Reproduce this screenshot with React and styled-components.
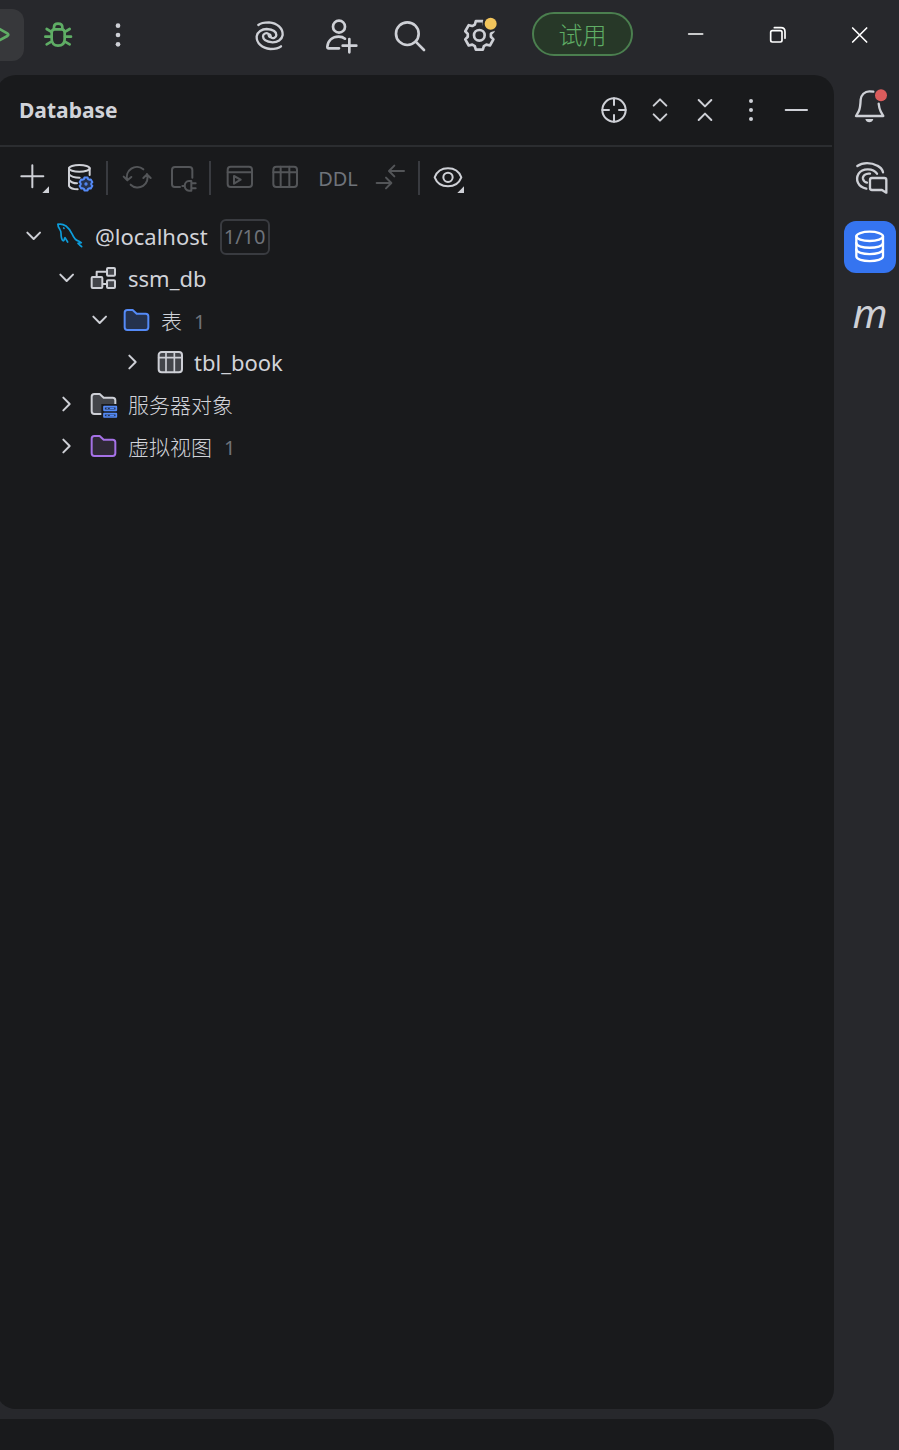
import React from "react";
import styled, { createGlobalStyle, css } from "styled-components";

const color = {
    frame : "#27282c",
    panel : "#191a1c",
    line : "#2b2d30",
    separator : "#393b40",
    text : "#d1d3d9",
    muted : "#6f737a",
    icon : "#ced0d6",
    disabled : "#535558",
    blue : "#548af7",
    green : "#5fad65"
};

const GlobalStyle = createGlobalStyle`
    * { box-sizing : border-box; }
    html, body, #root { height : 100%; }
    body {
        margin : 0;
        background : ${color.frame};
        color : ${color.text};
        font-family : "Noto Sans", "Noto Sans CJK SC", sans-serif;
        font-size : 22px;
        overflow : hidden;
    }
    button {
        padding : 0;
        border : 0;
        background : none;
        color : inherit;
        font : inherit;
        cursor : pointer;
    }
`;

const Window = styled.div`
    display : flex;
    flex-direction : column;
    height : 100vh;
`;

const TitleBar = styled.header`
    display : flex;
    align-items : center;
    justify-content : space-between;
    height : 75px;
    padding : 0 14px 5px 0;
`;

const Group = styled.div`
    display : flex;
    align-items : center;
    gap : ${props => props.$gap || 0}px;
`;

const RunButton = styled.button`
    display : flex;
    width : 24px;
    height : 52px;
    border-radius : 0 12px 12px 0;
    background : #37383b;
    overflow : hidden;
`;

const BarButton = styled.button`
    display : flex;
    align-items : center;
    justify-content : center;
    width : 52px;
    height : 52px;
    border-radius : 12px;
    ${props => props.$active && css`
        background : #3574f0;
    `}
`;

const TrialButton = styled.button`
    width : 101px;
    height : 44px;
    margin : 0 18px 2px 8px;
    padding-top : 2px;
    border : 2px solid #4b7f4f;
    border-radius : 22px;
    background : #273828;
    color : ${color.green};
    font-size : 24px;
    font-weight : 300;
    line-height : 36px;
`;

const Workspace = styled.div`
    display : flex;
    flex : 1;
    min-height : 0;
`;

const Column = styled.main`
    display : flex;
    flex : 1;
    flex-direction : column;
    gap : 10px;
    min-width : 0;
`;

const Panel = styled.section`
    flex : 1;
    margin-left : -4px;
    padding-left : 4px;
    border-radius : 20px;
    background : ${color.panel};
`;

const BottomPanel = styled.section`
    height : 31px;
    border-radius : 0 20px 0 0;
    background : ${color.panel};
`;

const PanelHeader = styled.div`
    display : flex;
    align-items : center;
    justify-content : space-between;
    height : 72px;
    margin-right : 2px;
    padding : 0 19px;
    border-bottom : 2px solid ${color.line};
`;

const Title = styled.h1`
    margin : 0;
    font-size : 21px;
    font-weight : 700;
`;

const SmallButton = styled.button`
    display : flex;
    width : 32px;
    height : 32px;
`;

const Toolbar = styled.div`
    display : flex;
    align-items : center;
    height : 62px;
    padding-left : 10px;
`;

const ToolButton = styled.button`
    display : flex;
    align-items : center;
    justify-content : center;
    width : ${props => props.$wide ? 60 : 46}px;
    height : 40px;
    color : ${props => props.disabled ? color.disabled : color.icon};
    font-size : 20px;
`;

const DdlLabel = styled.span`
    color : ${color.muted};
`;

const Separator = styled.span`
    width : 2px;
    height : 34px;
    margin : 0 5px 0 4px;
    background : ${color.separator};
`;

const Tree = styled.ul`
    margin : 0;
    padding : 7px 0 0;
    list-style : none;
`;

const Row = styled.li`
    display : flex;
    align-items : center;
    gap : 10px;
    height : 42px;
    padding-left : ${props => 22 + props.$level * 33}px;
`;

const Toggle = styled.button`
    display : flex;
    width : 24px;
    height : 24px;
`;

const Label = styled.span`
    padding : 0 2px 2px 1px;
    font-size : 22px;
    line-height : 30px;
    ${props => props.$cjk && css`
        padding-bottom : 0;
        font-size : 21px;
        font-weight : 300;
    `}
`;

const Count = styled.span`
    color : ${color.muted};
    font-size : 20px;
`;

const Badge = styled.span`
    padding : 0 2px;
    border : 2px solid ${color.separator};
    border-radius : 6px;
    color : ${color.muted};
    font-size : 20px;
    line-height : 32px;
`;

const Stripe = styled.nav`
    display : flex;
    flex-direction : column;
    align-items : center;
    gap : 18px;
    width : 65px;
    padding : 6px 0 0 7px;
`;

const Maven = styled.span`
    padding-bottom : 8px;
    color : ${color.icon};
    font-size : 40px;
    font-style : italic;
    line-height : 40px;
`;

const Svg = styled.svg`
    display : block;
    flex : none;
    overflow : visible;
    fill : none;
    stroke : currentColor;
    stroke-linecap : round;
    stroke-linejoin : round;
`;

// Icons are drawn on a grid three times finer than their size
const Icon = ({ size = 40, stroke = 8, tint = color.icon, children }) => (
    <Svg width={size} height={size} viewBox={`0 0 ${size * 3} ${size * 3}`} strokeWidth={stroke} color={tint} aria-hidden="true">
        {children}
    </Svg>
);

const gear = (cx, cy, outer, inner) => {
    const points = [];
    for (let i = 0; i < 6; i++) {
        const a = -Math.PI / 2 + i * Math.PI / 3;
        [[-0.4, inner], [-0.24, outer], [0.24, outer], [0.4, inner]].forEach(([d, r]) => {
            points.push(`${(cx + r * Math.cos(a + d)).toFixed(1)},${(cy + r * Math.sin(a + d)).toFixed(1)}`);
        });
    }
    return `M${points.join("L")}Z`;
};

const Corner = () => <path d="M96 73V93H76Z" fill="currentColor" stroke="none" />;

const Dots = ({ c, gap, r }) => (
    <g fill="currentColor" stroke="none">
        <circle cx={c} cy={c - gap} r={r} />
        <circle cx={c} cy={c} r={r} />
        <circle cx={c} cy={c + gap} r={r} />
    </g>
);

const swirl = "M25 30C33 23 45 22 57 22C82 24 99 40 98 60C96 74 82 82 68 82C52 81 39 75 39 64C39 55 50 53 54 56C58 59 54 65 60 66";
const folder = "M8 17Q8 9 16 9H32L44 20H71Q79 20 79 28V61Q79 69 71 69H16Q8 69 8 61Z";

const nodeIcons = {
    mysql : (
        <Icon size={28} stroke={5} tint="#0d9ddb">
            <path d="M6 4C14 2 24 5 30 9C38 15 44 24 49 34C53 44 60 52 69 55L76 59L66 61L71 66L77 71" />
            <path d="M6 4C5 10 8 14 12 20C17 26 14 33 16 42C17 48 20 55 23 53C26 50 24 46 27 44L35 57" />
            <path d="M23 15L24 16" />
        </Icon>
    ),
    schema : (
        <Icon size={28} stroke={6}>
            <path d="M23 34V20H53M40 57H53" />
            <g fill="#43454a">
                <rect x="8" y="36" width="32" height="33" rx="3" />
                <rect x="54" y="9" width="24" height="23" rx="3" />
                <rect x="54" y="46" width="24" height="23" rx="3" />
            </g>
        </Icon>
    ),
    tables : (
        <Icon size={28} stroke={6} tint={color.blue}>
            <path d={folder} fill="#25324d" />
        </Icon>
    ),
    table : (
        <Icon size={28} stroke={6}>
            <rect x="11" y="9" width="70" height="61" rx="9" fill="#43454a" />
            <path d="M11 26H81M33 9V70M58 9V70" strokeWidth="5" />
        </Icon>
    ),
    server : (
        <Icon size={28} stroke={6}>
            <path d={folder} fill="#43454a" />
            <path d="M37 39H86V84H37Z" fill={color.panel} stroke="none" />
            <g stroke={color.blue} fill="#25324d">
                <path d="M45 47H82V58H45ZM45 68H82V78H45Z" strokeWidth="5" />
                <path d="M54 52H55M64 52H74M54 73H55M64 73H74" strokeWidth="4" />
            </g>
        </Icon>
    ),
    views : (
        <Icon size={28} stroke={6} tint="#a571e6">
            <path d={folder} fill="#2f2936" />
        </Icon>
    )
};

const nodes = [
    { name : "@localhost", level : 0, icon : "mysql", open : true, badge : "1/10" },
    { name : "ssm_db", level : 1, icon : "schema", open : true },
    { name : "表", level : 2, icon : "tables", open : true, count : 1, cjk : true },
    { name : "tbl_book", level : 3, icon : "table" },
    { name : "服务器对象", level : 1, icon : "server", cjk : true },
    { name : "虚拟视图", level : 1, icon : "views", count : 1, cjk : true }
];

const TopBar = () => (
    <TitleBar>
        <Group $gap={8}>
            <RunButton aria-label="Run">
                <Svg width="24" height="52" viewBox="0 0 72 156" strokeWidth="8" color={color.green}>
                    <path d="M-20 50L22 73Q28 77 22 81L-20 104" />
                </Svg>
            </RunButton>
            <BarButton aria-label="Debug">
                <Icon tint={color.green}>
                    <path d="M50 43H71Q80 43 80 53V72C80 85 72 92 60 92C49 92 41 85 41 72V53Q41 43 50 43Z" />
                    <path d="M48 41V36C48 29 53 26 60 26S73 29 73 36V41" />
                    <path d="M26 42L39 50M22 65H40M26 88L40 80M95 42L82 50M99 65H81M95 88L81 80" />
                </Icon>
            </BarButton>
            <BarButton aria-label="More">
                <Icon><Dots c={60} gap={28} r={7} /></Icon>
            </BarButton>
        </Group>
        <Group $gap={18}>
            <BarButton aria-label="AI Assistant">
                <Icon stroke={7}>
                    <path d={swirl} />
                    <path d={swirl} transform="rotate(180 59 62)" />
                </Icon>
            </BarButton>
            <BarButton aria-label="Add user">
                <Icon>
                    <circle cx="57" cy="35" r="18" />
                    <path d="M57 100H26Q22 100 22 95C24 76 38 65 56 65C64 65 70 67 75 71" />
                    <path d="M68 92H109M88 72V112" />
                </Icon>
            </BarButton>
            <BarButton aria-label="Search">
                <Icon>
                    <circle cx="52" cy="56" r="34" />
                    <path d="M77 80L102 105" />
                </Icon>
            </BarButton>
            <BarButton aria-label="Settings">
                <Icon>
                    <path d={gear(58, 61, 44, 35)} />
                    <circle cx="58" cy="61" r="16" />
                    <circle cx="92" cy="26" r="25" fill={color.frame} stroke="none" />
                    <circle cx="92" cy="26" r="18" fill="#f2c55c" stroke="none" />
                </Icon>
            </BarButton>
            <TrialButton>试用</TrialButton>
            <Group $gap={30}>
                <BarButton aria-label="Minimize">
                    <Icon stroke={5} tint="#ffffff"><path d="M41 57H83" /></Icon>
                </BarButton>
                <BarButton aria-label="Restore">
                    <Icon stroke={5} tint="#ffffff">
                        <rect x="41" y="47" width="34" height="34" rx="5" />
                        <path d="M52 38H72Q84 38 84 50V70" />
                    </Icon>
                </BarButton>
                <BarButton aria-label="Close">
                    <Icon stroke={5} tint="#ffffff"><path d="M41 39L83 81M83 39L41 81" /></Icon>
                </BarButton>
            </Group>
        </Group>
    </TitleBar>
);

const DatabaseHeader = () => (
    <PanelHeader>
        <Title>Database</Title>
        <Group $gap={14}>
            <SmallButton aria-label="Locate">
                <Icon size={32} stroke={6}>
                    <circle cx="51" cy="48" r="35" />
                    <path d="M16 48H36M66 48H86M51 13V33M51 63V83" />
                </Icon>
            </SmallButton>
            <SmallButton aria-label="Expand all">
                <Icon size={32} stroke={6}><path d="M32 35L51 16L70 35M32 61L51 80L70 61" /></Icon>
            </SmallButton>
            <SmallButton aria-label="Collapse all">
                <Icon size={32} stroke={6}><path d="M29 18L48 37L67 18M29 78L48 59L67 78" /></Icon>
            </SmallButton>
            <SmallButton aria-label="Options">
                <Icon size={32}><Dots c={48} gap={27} r={6} /></Icon>
            </SmallButton>
            <SmallButton aria-label="Hide">
                <Icon size={32} stroke={6}><path d="M14 48H78" /></Icon>
            </SmallButton>
        </Group>
    </PanelHeader>
);

const DatabaseToolbar = () => (
    <Toolbar>
        <ToolButton aria-label="New">
            <Icon size={32} stroke={6}>
                <path d="M13 43H79M46 10V76" />
                <Corner />
            </Icon>
        </ToolButton>
        <ToolButton aria-label="Data source properties">
            <Icon size={32} stroke={6}>
                <ellipse cx="49" cy="19" rx="31" ry="10" />
                <path d="M18 19V72C22 79 32 82 44 82M80 19V39" />
                <path d="M18 37C24 44 36 47 50 47M18 54C24 61 32 64 42 64" />
                <g stroke={color.blue}>
                    <path d={gear(69, 66, 20, 16)} fill="#25324d" />
                    <circle cx="69" cy="66" r="2" />
                </g>
            </Icon>
        </ToolButton>
        <Separator />
        <ToolButton aria-label="Refresh" disabled>
            <Icon size={32} stroke={6} tint={color.disabled}>
                <path d="M22 54A30 30 0 0 1 70 22M11 44L22 55L34 45" />
                <path d="M81 36A30 30 0 0 1 32 68M70 48L81 37L92 48" />
            </Icon>
        </ToolButton>
        <ToolButton aria-label="Disconnect" disabled>
            <Icon size={32} stroke={6} tint={color.disabled}>
                <path d="M42 75H26Q18 75 18 67V24Q18 15 27 15H70Q79 15 79 24V47" />
                <path d="M76 57H69C52 57 52 86 69 86H76ZM76 64H89M76 79H89M49 72H56" />
            </Icon>
        </ToolButton>
        <Separator />
        <ToolButton aria-label="Query console" disabled>
            <Icon size={32} stroke={6} tint={color.disabled}>
                <rect x="14" y="14" width="73" height="61" rx="9" />
                <path d="M14 31H87M33 42L53 53L33 65Z" />
            </Icon>
        </ToolButton>
        <ToolButton aria-label="Edit data" disabled>
            <Icon size={32} stroke={6} tint={color.disabled}>
                <rect x="13" y="14" width="71" height="61" rx="9" />
                <path d="M13 31H84M35 14V75M61 14V75" />
            </Icon>
        </ToolButton>
        <ToolButton $wide disabled><DdlLabel>DDL</DdlLabel></ToolButton>
        <ToolButton aria-label="Compare" disabled>
            <Icon size={32} stroke={6} tint={color.disabled}>
                <path d="M5 63H48M33 47L49 63L33 79M87 27H43M58 11L42 27L58 43" />
            </Icon>
        </ToolButton>
        <Separator />
        <ToolButton aria-label="View options">
            <Icon size={32} stroke={6}>
                <path d="M8 46C22 10 74 10 88 46C74 82 22 82 8 46Z" />
                <circle cx="48" cy="46" r="14" />
                <Corner />
            </Icon>
        </ToolButton>
    </Toolbar>
);

const DatabaseTree = () => (
    <Tree role="tree">
        {nodes.map(({ name, level, icon, open, count, badge, cjk }) => (
            <Row key={name} $level={level} role="treeitem" aria-level={level + 1} aria-expanded={!!open}>
                <Toggle aria-label={open ? "Collapse" : "Expand"}>
                    <Icon size={24} stroke={6}>
                        <path d={open ? "M16 23L35 42L54 23" : "M25 14L44 33L25 52"} />
                    </Icon>
                </Toggle>
                {nodeIcons[icon]}
                <Label $cjk={cjk}>{name}</Label>
                {count && <Count>{count}</Count>}
                {badge && <Badge>{badge}</Badge>}
            </Row>
        ))}
    </Tree>
);

const ToolStripe = () => (
    <Stripe>
        <BarButton aria-label="Notifications">
            <Icon stroke={7}>
                <path d="M70 14C66 13 62 13 58 13C44 13 33 24 32 38C31 60 30 66 26 73L18 87H100L92 73C88 66 87 60 86 50" />
                <path d="M46 96H70Q67 106 58 106Q49 106 46 96Z" fill="currentColor" stroke="none" />
                <circle cx="93" cy="25" r="18" fill="#db5c5c" stroke="none" />
            </Icon>
        </BarButton>
        <BarButton aria-label="AI Chat">
            <Icon stroke={7}>
                <path d="M22 27C38 15 64 16 82 26C92 31 97 38 99 46" />
                <path d="M81 50C70 34 38 32 26 50C15 68 24 90 49 95" />
                <path d="M60 50C47 48 37 57 39 66C41 73 45 76 51 77" />
                <path d="M66 63H103Q109 63 109 69V107L96 99H66Q60 99 60 93V69Q60 63 66 63Z" />
            </Icon>
        </BarButton>
        <BarButton $active aria-label="Database">
            <Icon tint="#ffffff" stroke={7}>
                <ellipse cx="59" cy="28" rx="40" ry="14" />
                <path d="M19 28V88C19 107 99 107 99 88V28" />
                <path d="M19 48C19 67 99 67 99 48M19 67C19 86 99 86 99 67" />
            </Icon>
        </BarButton>
        <BarButton aria-label="Maven"><Maven>m</Maven></BarButton>
    </Stripe>
);

class App extends React.Component {

    render(){
        return(
            <Window>
                <GlobalStyle />
                <TopBar />
                <Workspace>
                    <Column>
                        <Panel>
                            <DatabaseHeader />
                            <DatabaseToolbar />
                            <DatabaseTree />
                        </Panel>
                        <BottomPanel />
                    </Column>
                    <ToolStripe />
                </Workspace>
            </Window>
        )
    }
};

export default App;
